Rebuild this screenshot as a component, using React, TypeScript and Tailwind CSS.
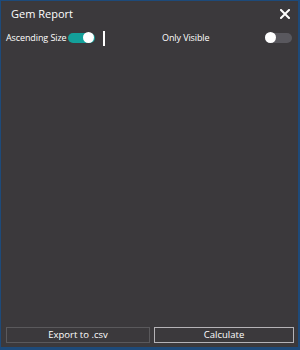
export default function App() {
  return (
    <div
      className="w-[300px] h-[350px] bg-[#1d4a7a] pt-px pl-px pr-[2px] pb-[3px]"
      style={{ fontFamily: '"Open Sans", "Noto Sans", sans-serif' }}
    >
      <div className="w-full h-full bg-[#3b393c] flex flex-col text-white">
        <div className="h-[26px] flex items-center justify-between pl-[10px] pr-[8px]">
          <span className="text-[11px]">Gem Report</span>
          <svg width="10" height="10" viewBox="0 0 10 10" className="mt-[-1px]">
            <path d="M1 1 L9 9 M9 1 L1 9" stroke="white" strokeWidth="2" strokeLinecap="square" />
          </svg>
        </div>
        <div className="h-[22px] flex items-center pl-[5px] pr-[6px]">
          <span className="text-[9px] tracking-[-0.1px] w-[62px] shrink-0 whitespace-nowrap">Ascending Size</span>
          <div className="w-[27px] h-[10px] rounded-full bg-[#13a09a] relative shrink-0">
            <div className="absolute right-[1px] top-[-1px] w-[11px] h-[11px] rounded-full bg-white" />
          </div>
          <div className="w-[2px] h-[15px] bg-white ml-[8px] shrink-0" />
          <span className="text-[9px] tracking-[-0.1px] ml-[57px] whitespace-nowrap">Only Visible</span>
          <div className="flex-1" />
          <div className="w-[27px] h-[10px] rounded-full bg-[#59585e] relative shrink-0">
            <div className="absolute left-0 top-[-1px] w-[11px] h-[11px] rounded-full bg-white" />
          </div>
        </div>
        <div className="flex-1" />
        <div className="flex gap-[4px] pl-[5px] pb-[4px]">
          <button className="w-[144px] h-[16px] border border-[#5a595c] text-[9.5px] leading-none flex items-center justify-center">
            Export to .csv
          </button>
          <button className="w-[140px] h-[16px] border border-[#b5b3b7] text-[9.5px] leading-none flex items-center justify-center">
            Calculate
          </button>
        </div>
      </div>
    </div>
  );
}
